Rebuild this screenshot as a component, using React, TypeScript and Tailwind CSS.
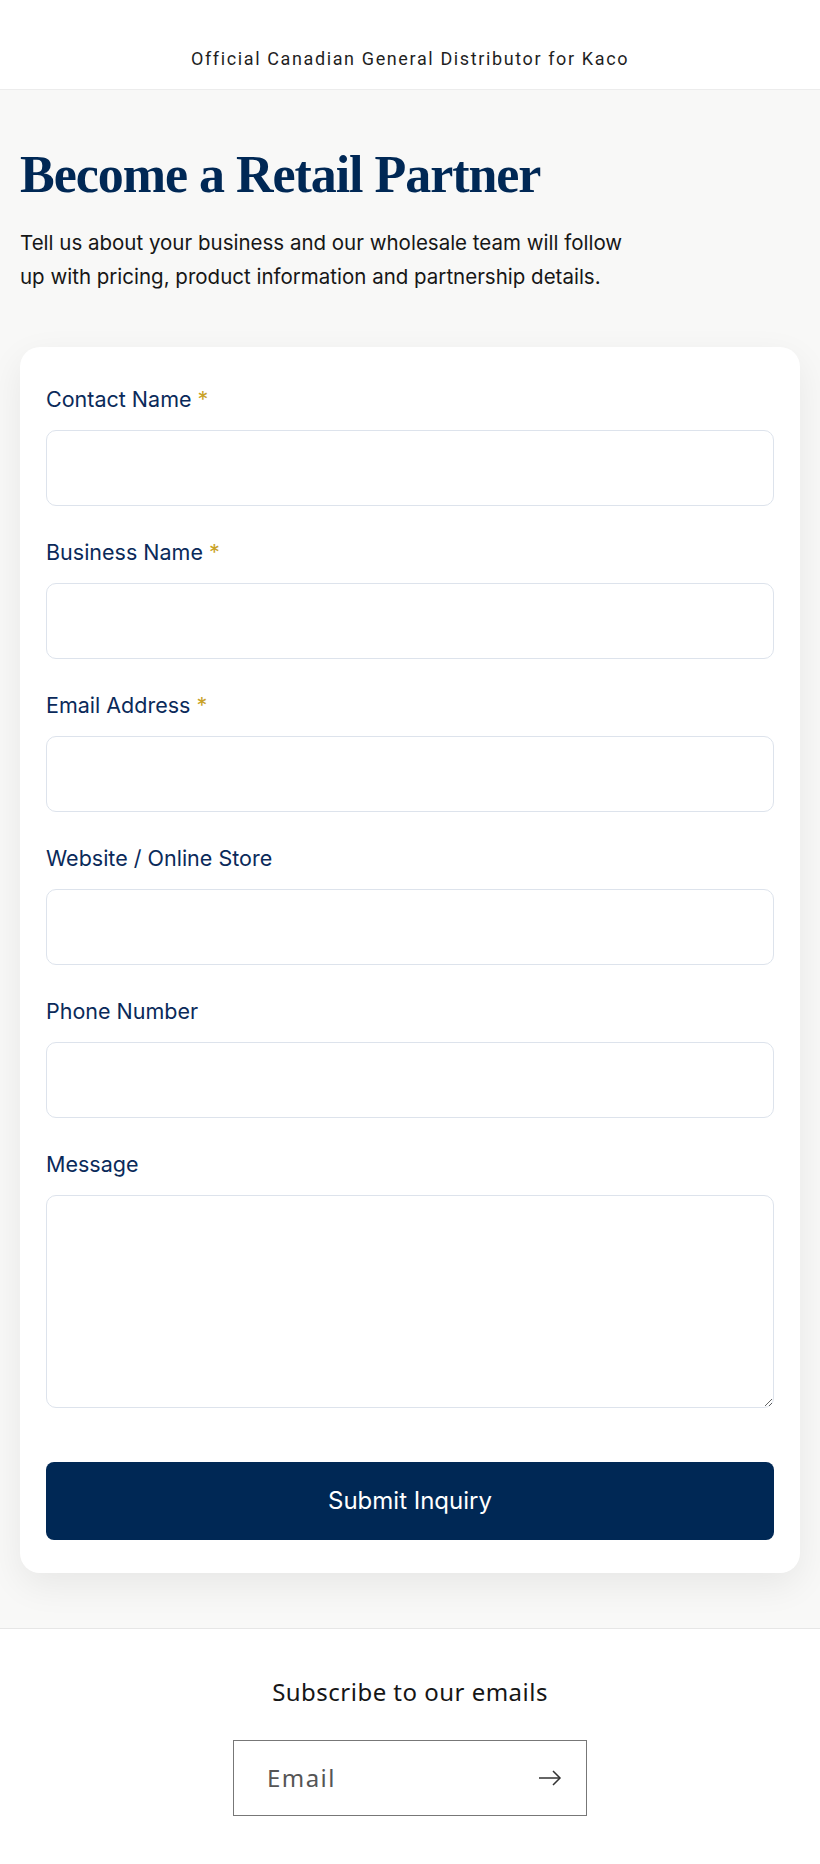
import React from "react";

const fields = [
  { label: "Contact Name", required: true, type: "text" },
  { label: "Business Name", required: true, type: "text" },
  { label: "Email Address", required: true, type: "email" },
  { label: "Website / Online Store", required: false, type: "url" },
  { label: "Phone Number", required: false, type: "tel" },
];

const inputClass =
  "w-full rounded-[10px] border border-[#dde3ec] bg-white px-4 text-[18px] text-[#0a2a5a] outline-none focus:border-[#002855]";

const App = () => {
  return (
    <div className="min-h-screen bg-white" style={{ fontFamily: "Inter, 'Noto Sans', sans-serif" }}>
      {/* Announcement bar */}
      <div className="h-[90px] border-b border-[#ececec] bg-white pt-[46px] text-center">
        <p
          className="text-[18px] leading-[26px] tracking-[0.09em] text-[#1f1f1f]"
          style={{ fontFamily: "Roboto, 'Noto Sans', sans-serif" }}
        >
          Official Canadian General Distributor for Kaco
        </p>
      </div>

      {/* Main */}
      <main className="bg-[#f8f8f7] px-5 pt-[54px] pb-[55px]">
        <h1
          className="text-[52px] font-bold leading-[1.2] tracking-[-0.02em] text-[#002855]"
          style={{ fontFamily: "'Liberation Serif', 'DejaVu Serif', serif" }}
        >
          Become a Retail Partner
        </h1>
        <p className="mt-5 max-w-[612px] text-[20.5px] leading-[34px] text-[#161616]">
          Tell us about your business and our wholesale team will follow up with pricing, product information and
          partnership details.
        </p>

        <form
          className="mt-[53px] rounded-[20px] bg-white px-[26px] pt-[38px] pb-[33px] shadow-[0_12px_36px_rgba(0,0,0,0.07)]"
          onSubmit={(e) => e.preventDefault()}
        >
          <div className="flex flex-col gap-8">
            {fields.map((f) => (
              <label key={f.label} className="flex flex-col gap-[17px]">
                <span className="text-[21.5px] leading-[28px] text-[#0a2a5a]">
                  {f.label}
                  {f.required && <span className="ml-1.5 text-[#c9a227]">*</span>}
                </span>
                <input type={f.type} className={`${inputClass} h-[76px]`} />
              </label>
            ))}
            <label className="flex flex-col gap-[17px]">
              <span className="text-[21.5px] leading-[28px] text-[#0a2a5a]">Message</span>
              <textarea className={`${inputClass} h-[213px] py-3`} />
            </label>
          </div>

          <button
            type="submit"
            className="mt-[54px] h-[78px] w-full rounded-[8px] bg-[#002855] text-[24px] font-normal text-white"
          >
            Submit Inquiry
          </button>
        </form>
      </main>

      {/* Newsletter */}
      <footer
        className="border-t border-[#e6e6e6] bg-white pt-[46px] pb-[48px]"
        style={{ fontFamily: "'Noto Sans', Roboto, sans-serif" }}
      >
        <h2 className="text-center text-[24px] leading-[34px] tracking-[0.02em] text-[#161616]">
          Subscribe to our emails
        </h2>
        <div className="mx-auto mt-[31px] flex h-[76px] w-[354px] items-center border border-[#777] pl-[33px] pr-[24px]">
          <input
            type="email"
            placeholder="Email"
            className="min-w-0 flex-1 bg-transparent text-[24px] tracking-[0.06em] text-[#222] outline-none placeholder:text-[#555]"
          />
          <button type="button" aria-label="Subscribe" className="text-[#333]">
            <svg width="24" height="16" viewBox="0 0 24 16" fill="none" stroke="currentColor" strokeWidth="1.5">
              <path d="M1 8h21" />
              <path d="M15 1l7 7-7 7" />
            </svg>
          </button>
        </div>
      </footer>
    </div>
  );
};

export default App;
